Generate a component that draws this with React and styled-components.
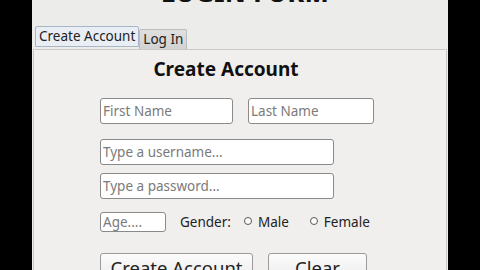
import React from "react";
import styled, { createGlobalStyle } from "styled-components";

const GlobalStyle = createGlobalStyle`
  html, body {
    margin: 0;
    padding: 0;
    background: #000;
    width: 480px;
    height: 270px;
    overflow: hidden;
  }
  * {
    box-sizing: border-box;
  }
`;

const Screen = styled.div`
  width: 480px;
  height: 270px;
  display: flex;
  justify-content: center;
  font-family: "Noto Sans", "DejaVu Sans", sans-serif;
`;

const Window = styled.div`
  width: 416px;
  height: 270px;
  background: #ececeb;
  display: flex;
  flex-direction: column;
  overflow: hidden;
`;

const Title = styled.h1`
  margin: -21px 0 0 0;
  height: 26px;
  line-height: 26px;
  font-size: 25px;
  font-weight: 800;
  text-align: center;
  color: #111;
  padding-left: 10px;
  letter-spacing: 0.5px;
`;

const TabBar = styled.div`
  display: flex;
  align-items: flex-end;
  padding-left: 3px;
  margin-top: 21px;
  height: 23px;
`;

const Tab = styled.div`
  height: ${(p) => (p.active ? "21px" : "20px")};
  margin-bottom: ${(p) => (p.active ? "2px" : "0")};
  padding: 0 3px;
  font-size: 13.5px;
  line-height: 19px;
  color: #222;
  border: 1px solid ${(p) => (p.active ? "#a9b6c6" : "#bdbdbd")};
  border-bottom: ${(p) => (p.active ? "1px solid #a9b6c6" : "none")};
  background: ${(p) =>
    p.active ? "#e9eef5" : "linear-gradient(#e0e0e0, #d2d2d2)"};
  border-radius: 2px 2px 0 0;
`;

const Panel = styled.div`
  flex: 1;
  margin: 0 1px;
  background: #f0efed;
  border: 1px solid #c9c9c9;
  border-bottom: none;
  display: flex;
  flex-direction: column;
  align-items: flex-start;
  padding-left: 66px;
`;

const Heading = styled.h2`
  margin: 7px 0 0 0;
  width: 252px;
  text-align: center;
  font-size: 19px;
  font-weight: 700;
  line-height: 24px;
  color: #111;
`;

const Row = styled.div`
  display: flex;
  align-items: center;
  gap: ${(p) => p.gap ?? 14}px;
  margin-top: ${(p) => p.top ?? 0}px;
`;

const Field = styled.input`
  width: ${(p) => p.w}px;
  height: ${(p) => p.h || 26}px;
  border: 1px solid #8a8a8a;
  border-radius: 3px;
  background: #fff;
  padding: 0 2px 1px 2px;
  font-family: "Noto Sans", "DejaVu Sans", sans-serif;
  font-size: 13.5px;
  color: #333;
  outline: none;
  &::placeholder {
    color: #7a7a7a;
  }
`;

const Label = styled.span`
  font-size: 13.5px;
  color: #222;
  margin-left: ${(p) => p.left ?? 0}px;
`;

const Radio = styled.label`
  display: flex;
  align-items: center;
  gap: 6px;
  font-size: 13.5px;
  color: #222;
  margin-left: ${(p) => p.left ?? 0}px;
`;

const Dot = styled.span`
  width: 8px;
  height: 8px;
  border-radius: 50%;
  border: 1px solid #555;
  background: #fff;
  margin-top: -3px;
`;

const Button = styled.button`
  width: ${(p) => p.w}px;
  height: 28px;
  border: 1px solid #9a9a9a;
  border-radius: 3px;
  background: linear-gradient(#fbfbfb, #ececec);
  font-family: "Noto Sans", "DejaVu Sans", sans-serif;
  font-size: 18.5px;
  color: #222;
  padding: 1px 0 0 0;
  display: flex;
  justify-content: center;
  align-items: flex-start;
`;

export default function App() {
  return (
    <>
      <GlobalStyle />
      <Screen>
        <Window>
          <Title>LOGIN FORM</Title>
          <TabBar>
            <Tab active>Create Account</Tab>
            <Tab>Log In</Tab>
          </TabBar>
          <Panel>
            <Heading>Create Account</Heading>
            <Row top={17} gap={15}>
              <Field w={133} placeholder="First Name" />
              <Field w={126} placeholder="Last Name" />
            </Row>
            <Row top={15}>
              <Field w={234} placeholder="Type a username..." />
            </Row>
            <Row top={8}>
              <Field w={234} placeholder="Type a password..." />
            </Row>
            <Row top={13} gap={0}>
              <Field w={66} h={20} placeholder="Age...." />
              <Label left={14}>Gender:</Label>
              <Radio left={13}>
                <Dot />
                Male
              </Radio>
              <Radio left={21}>
                <Dot />
                Female
              </Radio>
            </Row>
            <Row top={21} gap={15}>
              <Button w={153}>Create Account</Button>
              <Button w={99}>Clear</Button>
            </Row>
          </Panel>
        </Window>
      </Screen>
    </>
  );
}
